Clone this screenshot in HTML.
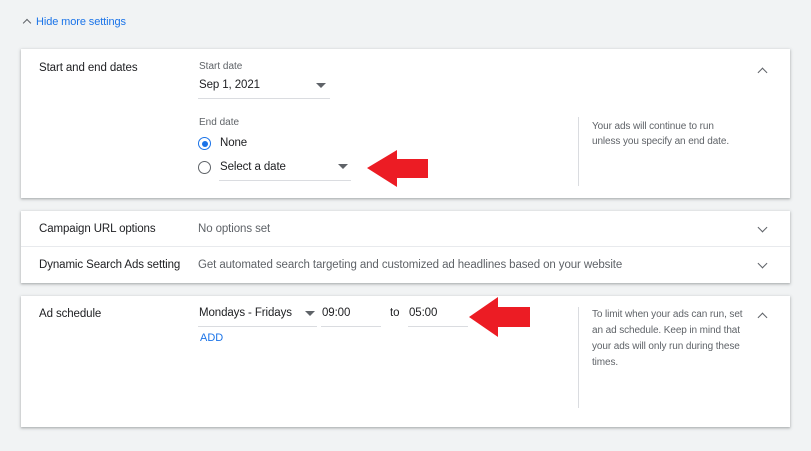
<!DOCTYPE html><html><head><style>
body{margin:0;width:811px;height:451px;background:#f1f3f4;font-family:"Liberation Sans",Arial,sans-serif;position:relative;overflow:hidden;color:#202124}
.a{position:absolute;white-space:nowrap}
.card{position:absolute;left:21px;width:769px;background:#fff;box-shadow:0 1px 2px rgba(60,64,67,.3),0 1px 3px 1px rgba(60,64,67,.12)}
.s{font-size:11.5px;letter-spacing:-0.1px}
.g{color:#5f6368}
.ul{position:absolute;height:1px;background:#dadce0}
.tri{position:absolute;width:0;height:0;border-left:5px solid transparent;border-right:5px solid transparent;border-top:5px solid #5f6368}
.chev{position:absolute;width:6px;height:6px;border-left:1.5px solid #5f6368;border-top:1.5px solid #5f6368}
</style></head><body>
<div class="a" style="left:22px;top:16px;font-size:11px;color:#1a73e8;letter-spacing:-0.1px"><span style="display:inline-block;width:5px;height:5px;border-left:1.5px solid #5f6368;border-top:1.5px solid #5f6368;transform:rotate(45deg);margin:0 6px 0 2px;position:relative;top:1px"></span>Hide more settings</div>

<div class="card" style="top:49px;height:149px"></div>
<div class="a s" style="left:39px;top:62px">Start and end dates</div>
<div class="a g" style="left:199px;top:61px;font-size:10px">Start date</div>
<div class="a s" style="left:199px;top:79px">Sep 1, 2021</div>
<div class="tri" style="left:316px;top:83px"></div>
<div class="ul" style="left:198px;top:98px;width:132px"></div>
<div class="a g" style="left:199px;top:117px;font-size:10px">End date</div>
<div class="a" style="left:198px;top:137px;width:11px;height:11px;border:1.5px solid #1a73e8;border-radius:50%"></div>
<div class="a" style="left:202px;top:141px;width:6px;height:6px;background:#1a73e8;border-radius:50%"></div>
<div class="a s" style="left:220px;top:137px">None</div>
<div class="a" style="left:198px;top:161px;width:11px;height:11px;border:1.5px solid #5f6368;border-radius:50%"></div>
<div class="a s" style="left:220px;top:161px">Select a date</div>
<div class="tri" style="left:338px;top:164px"></div>
<div class="ul" style="left:219px;top:180px;width:132px"></div>
<div class="a" style="left:578px;top:117px;width:1px;height:69px;background:#dadce0"></div>
<div class="a g" style="left:592px;top:119px;font-size:10px;line-height:15px;letter-spacing:-0.1px">Your ads will continue to run<br>unless you specify an end date.</div>
<div class="chev" style="left:759px;top:69px;transform:rotate(45deg)"></div>
<svg class="a" style="left:366px;top:149px" width="64" height="40"><polygon points="1,19 31,1 31,10 62,10 62,29 31,29 31,38" fill="#ec1c24"/></svg>

<div class="card" style="top:211px;height:72px"></div>
<div class="ul" style="left:21px;top:246px;width:769px;background:#e8eaed"></div>
<div class="a s" style="left:39px;top:223px">Campaign URL options</div>
<div class="a s g" style="left:198px;top:223px">No options set</div>
<div class="a s" style="left:39px;top:259px">Dynamic Search Ads setting</div>
<div class="a s g" style="left:198px;top:259px">Get automated search targeting and customized ad headlines based on your website</div>
<div class="chev" style="left:759px;top:224px;transform:rotate(225deg)"></div>
<div class="chev" style="left:759px;top:260px;transform:rotate(225deg)"></div>

<div class="card" style="top:296px;height:131px"></div>
<div class="a s" style="left:39px;top:308px">Ad schedule</div>
<div class="a s" style="left:199px;top:307px">Mondays - Fridays</div>
<div class="tri" style="left:305px;top:311px"></div>
<div class="ul" style="left:198px;top:326px;width:119px"></div>
<div class="a s" style="left:322px;top:307px">09:00</div>
<div class="ul" style="left:321px;top:326px;width:60px"></div>
<div class="a s" style="left:390px;top:307px">to</div>
<div class="a s" style="left:409px;top:307px">05:00</div>
<div class="ul" style="left:408px;top:326px;width:60px"></div>
<div class="a" style="left:200px;top:332px;font-size:11px;color:#1a73e8">ADD</div>
<div class="a" style="left:578px;top:307px;width:1px;height:101px;background:#dadce0"></div>
<div class="a g" style="left:592px;top:307px;font-size:10px;line-height:16px;letter-spacing:-0.1px">To limit when your ads can run, set<br>an ad schedule. Keep in mind that<br>your ads will only run during these<br>times.</div>
<div class="chev" style="left:759px;top:314px;transform:rotate(45deg)"></div>
<svg class="a" style="left:468px;top:296px" width="64" height="42"><polygon points="1,21 30,1 30,11 62,11 62,31 30,31 30,41" fill="#ec1c24"/></svg>
</body></html>
